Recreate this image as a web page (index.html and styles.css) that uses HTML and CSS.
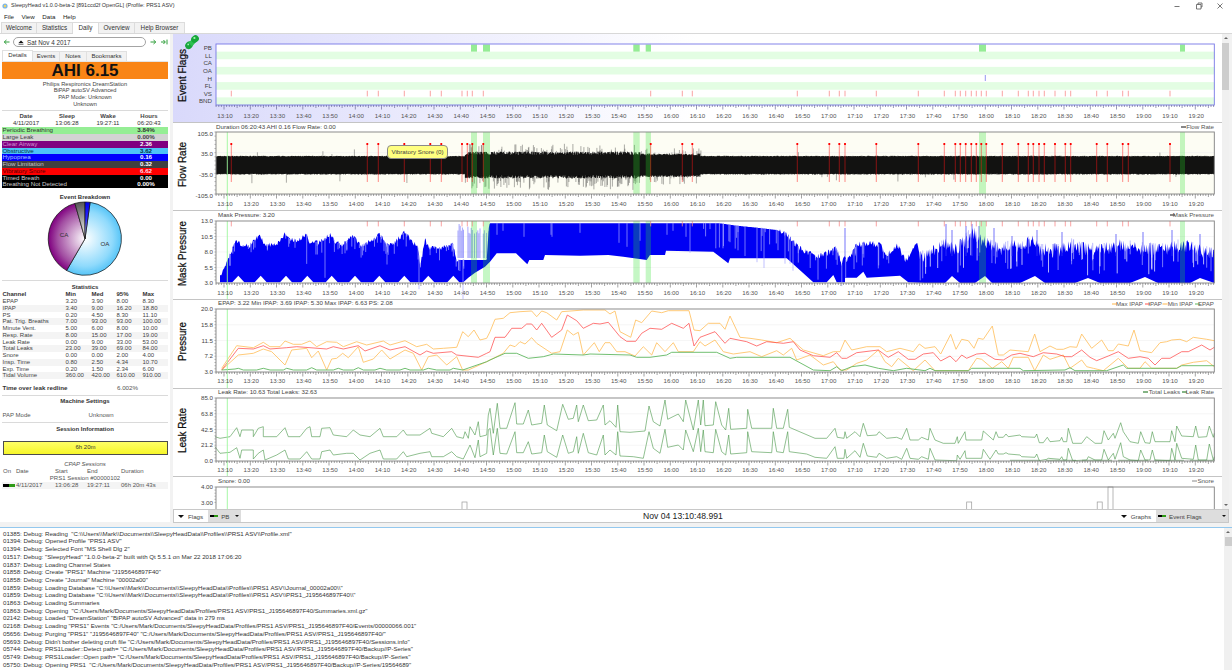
FILE: index.html
```html
<!DOCTYPE html>
<html lang="en">
<head>
<meta charset="utf-8">
<title>SleepyHead</title>
<link rel="stylesheet" href="styles.css">
</head>
<body>
<div class="app">
  <header class="titlebar">
    <svg class="app-icon" viewBox="0 0 6 6"><circle cx="3" cy="3" r="2.6" fill="#7fb6e6"/><circle cx="3" cy="3" r="1.2" fill="#f4d35e"/></svg>
    <span>SleepyHead v1.0.0-beta-2 [891ccd2f OpenGL] (Profile: PRS1 ASV)</span>
    <div class="winctl">
      <svg viewBox="0 0 8 8"><path d="M1.5 4.5h5" stroke="#777"/></svg>
      <svg viewBox="0 0 8 8"><path d="M1.5 2.5h4.5v4.5h-4.5zM3 2.5v-1.5h4v4h-1" fill="none" stroke="#555" stroke-width=".8"/></svg>
      <svg viewBox="0 0 8 8"><path d="M1.5 1.5l5 5M6.5 1.5l-5 5" stroke="#555" stroke-width=".8"/></svg>
    </div>
  </header>
  <nav class="menubar"><span>File</span><span>View</span><span>Data</span><span>Help</span></nav>
  <nav class="tabs">
    <span class="tab tab-welcome">Welcome</span>
    <span class="tab tab-stats">Statistics</span>
    <span class="tab tab-daily is-active">Daily</span>
    <span class="tab tab-over">Overview</span>
    <span class="tab tab-help">Help Browser</span>
  </nav>
  <main class="main">
    <aside class="side">
      <div class="datenav">
        <svg class="nav-arrow" viewBox="0 0 7 6"><path d="M6.5 3H1.5M3.5 1L1.2 3l2.3 2" fill="none" stroke="#2f9e3a" stroke-width="1"/></svg>
        <div class="datebox"><svg viewBox="0 0 6 5"><path d="M.5 3L3 .5 5.5 3z" fill="#111"/><path d="M.5 4.2h5" stroke="#111" stroke-width=".7"/></svg><span>Sat Nov 4 2017</span></div>
        <svg class="nav-arrow" viewBox="0 0 7 6"><path d="M.5 3h5M3.5 1l2.3 2-2.3 2" fill="none" stroke="#2f9e3a" stroke-width="1"/></svg>
        <svg class="nav-arrow" viewBox="0 0 7 6"><path d="M0 3h4M2.4 1l2 2-2 2M6 .6v4.8" fill="none" stroke="#2f9e3a" stroke-width="1"/></svg>
      </div>
      <div class="subtabs">
        <span class="subtab sub-details is-active">Details</span>
        <span class="subtab sub-events">Events</span>
        <span class="subtab sub-notes">Notes</span>
        <span class="subtab sub-books">Bookmarks</span>
      </div>
      <div class="ahi">AHI 6.15</div>
      <div class="machine">
        <div>Philips Respironics DreamStation</div>
        <div>BiPAP autoSV Advanced</div>
        <div>PAP Mode: Unknown</div>
        <div>Unknown</div>
      </div>
      <hr class="rule rule-machine">
      <div class="daytable">
        <b>Date</b><b>Sleep</b><b>Wake</b><b>Hours</b>
        <span>4/11/2017</span><span>13:06:28</span><span>19:27:11</span><span>06:20:43</span>
      </div>
      <div class="indices">
        <div class="idx idx-pb"><span>Periodic Breathing</span><b>3.84%</b></div>
        <div class="idx idx-ll"><span>Large Leak</span><b>0.00%</b></div>
        <div class="idx idx-ca"><span>Clear Airway</span><b>2.36</b></div>
        <div class="idx idx-oa"><span>Obstructive</span><b>3.62</b></div>
        <div class="idx idx-h"><span>Hypopnea</span><b>0.16</b></div>
        <div class="idx idx-fl"><span>Flow Limitation</span><b>0.32</b></div>
        <div class="idx idx-vs"><span>Vibratory Snore</span><b>6.62</b></div>
        <div class="idx idx-tb"><span>Timed Breath</span><b>0.00</b></div>
        <div class="idx idx-bnd"><span>Breathing Not Detected</span><b>0.00%</b></div>
      </div>
      <div class="section-title title-pie">Event Breakdown</div>
      <svg class="pie" viewBox="40 202 90 76" aria-label="Event breakdown pie chart">
        <defs>
          <radialGradient id="gOA" gradientUnits="userSpaceOnUse" cx="85" cy="239.7" r="36.7"><stop offset="0" stop-color="#fff"/><stop offset=".75" stop-color="#8fdafc"/><stop offset="1" stop-color="#55c4f7"/></radialGradient>
          <radialGradient id="gCA" gradientUnits="userSpaceOnUse" cx="85" cy="239.7" r="36.7"><stop offset="0" stop-color="#fff"/><stop offset=".75" stop-color="#a24ea2"/><stop offset="1" stop-color="#800080"/></radialGradient>
          <radialGradient id="gFL" gradientUnits="userSpaceOnUse" cx="85" cy="239.7" r="36.7"><stop offset="0" stop-color="#fff"/><stop offset="1" stop-color="#555"/></radialGradient>
          <radialGradient id="gH" gradientUnits="userSpaceOnUse" cx="85" cy="239.7" r="36.7"><stop offset="0" stop-color="#fff"/><stop offset=".5" stop-color="#3030ff"/><stop offset="1" stop-color="#0000f0"/></radialGradient>
        </defs>
        <g stroke="#111" stroke-width=".7">
          <path fill="url(#gOA)" d="M85 239.7L90.1 203.3A36.7 36.7 0 1 1 66.6 271.5Z"/>
          <path fill="url(#gCA)" d="M85 239.7L66.6 271.5A36.7 36.7 0 0 1 74.9 204.4Z"/>
          <path fill="url(#gFL)" d="M85 239.7L74.9 204.4A36.7 36.7 0 0 1 85 203Z"/>
          <path fill="url(#gH)" d="M85 239.7L85 203A36.7 36.7 0 0 1 90.1 203.3Z"/>
        </g>
        <text x="64" y="237.7" text-anchor="middle" class="pie-label">CA</text>
        <text x="105" y="247" text-anchor="middle" class="pie-label">OA</text>
      </svg>
      <hr class="rule rule-pie">
      <div class="section-title title-stats">Statistics</div>
      <div class="stats">
        <div class="st st-head"><span>Channel</span><span>Min</span><span>Med</span><span>95%</span><span>Max</span></div>
        <div class="st"><span>EPAP</span><span>3.20</span><span>3.90</span><span>8.00</span><span>8.30</span></div>
        <div class="st st-alt"><span>IPAP</span><span>3.40</span><span>9.00</span><span>16.20</span><span>18.80</span></div>
        <div class="st"><span>PS</span><span>0.20</span><span>4.50</span><span>8.30</span><span>11.10</span></div>
        <div class="st st-alt"><span>Pat. Trig. Breaths</span><span>7.00</span><span>93.00</span><span>93.00</span><span>100.00</span></div>
        <div class="st"><span>Minute Vent.</span><span>5.00</span><span>6.00</span><span>8.00</span><span>10.00</span></div>
        <div class="st st-alt"><span>Resp. Rate</span><span>8.00</span><span>15.00</span><span>17.00</span><span>19.00</span></div>
        <div class="st"><span>Leak Rate</span><span>0.00</span><span>9.00</span><span>33.00</span><span>53.00</span></div>
        <div class="st st-alt"><span>Total Leaks</span><span>23.00</span><span>39.00</span><span>69.00</span><span>84.00</span></div>
        <div class="st"><span>Snore</span><span>0.00</span><span>0.00</span><span>2.00</span><span>4.00</span></div>
        <div class="st st-alt"><span>Insp. Time</span><span>0.80</span><span>2.50</span><span>4.34</span><span>10.70</span></div>
        <div class="st"><span>Exp. Time</span><span>0.20</span><span>1.50</span><span>2.34</span><span>6.00</span></div>
        <div class="st st-alt"><span>Tidal Volume</span><span>360.00</span><span>420.00</span><span>610.00</span><span>910.00</span></div>
      </div>
      <div class="redline"><b>Time over leak redline</b><span>6.002%</span></div>
      <hr class="rule rule-redline">
      <div class="section-title title-machine">Machine Settings</div>
      <div class="papmode"><span>PAP Mode</span><span>Unknown</span></div>
      <hr class="rule rule-pap">
      <div class="section-title title-session">Session Information</div>
      <div class="sessionbar">6h 20m</div>
      <div class="cpap-title">CPAP Sessions</div>
      <div class="sess sess-head"><span>On</span><span>Date</span><span>Start</span><span>End</span><span>Duration</span></div>
      <div class="sess-name">PRS1 Session #00000102</div>
      <div class="sess sess-row"><span class="swatch"></span><span>4/11/2017</span><span>13:06:28</span><span>19:27:11</span><span>06h 20m 43s</span></div>
    </aside>
    <section class="graphcol">
      <div class="graphwrap">
        <div class="graphs" id="graphs"></div>
        <div class="vscroll"><span class="sc-up"></span><span class="sc-thumb"></span><span class="sc-down"></span></div>
        <svg class="pin" viewBox="0 0 14 15" aria-hidden="true">
          <path d="M.5 14.5L4 10" stroke="#8a8a8a" stroke-width=".8"/>
          <ellipse cx="4" cy="10.2" rx="3.6" ry="4" transform="rotate(40 4 10.2)" fill="#18a63c"/>
          <path d="M3.5 7.5L8.5 3 11.5 6.5 7 11.5z" fill="#2cc050"/>
          <ellipse cx="10" cy="4" rx="4" ry="3.5" transform="rotate(-35 10 4)" fill="#16a83a"/>
          <circle cx="9.4" cy="3" r="1.1" fill="#a8f4b8"/>
          <circle cx="3.2" cy="9.4" r=".9" fill="#a0f0b0"/>
        </svg>
        <div class="tooltip">Vibratory Snore (0)</div>
      </div>
      <div class="bottombar">
        <div class="bb-group">
          <span class="tri"></span><span class="bb-label">Flags</span>
          <div class="combo combo-flags"><i class="swatch"></i><span>PB</span><u class="tri tri-small"></u></div>
        </div>
        <div class="bb-time">Nov 04 13:10:48.991</div>
        <div class="bb-group">
          <span class="tri"></span><span class="bb-label">Graphs</span>
          <div class="combo combo-graphs"><i class="swatch"></i><span>Event Flags</span><u class="tri tri-small"></u></div>
        </div>
      </div>
    </section>
  </main>
  <section class="logpanel">
    <pre class="log">01385: Debug: Reading  "C:\\Users\\Mark\\Documents\\SleepyHeadData\\Profiles\\PRS1 ASV\\Profile.xml"
01394: Debug: Opened Profile "PRS1 ASV"
01394: Debug: Selected Font "MS Shell Dlg 2"
01517: Debug: "SleepyHead" "1.0.0-beta-2" built with Qt 5.5.1 on Mar 22 2018 17:06:20
01837: Debug: Loading Channel States
01858: Debug: Create "PRS1" Machine "J195646897F40"
01858: Debug: Create "Journal" Machine "00002a00"
01859: Debug: Loading Database "C:\\Users\\Mark\\Documents\\SleepyHeadData\\Profiles\\PRS1 ASV\\Journal_00002a00\\"
01859: Debug: Loading Database "C:\\Users\\Mark\\Documents\\SleepyHeadData\\Profiles\\PRS1 ASV\\PRS1_J195646897F40\\"
01863: Debug: Loading Summaries
01863: Debug: Opening  "C:/Users/Mark/Documents/SleepyHeadData/Profiles/PRS1 ASV/PRS1_J195646897F40/Summaries.xml.gz"
02142: Debug: Loaded "DreamStation" "BiPAP autoSV Advanced" data in 279 ms
02168: Debug: Loading "PRS1" Events "C:/Users/Mark/Documents/SleepyHeadData/Profiles/PRS1 ASV/PRS1_J195646897F40/Events/00000066.001"
05656: Debug: Purging "PRS1" "J195646897F40" "C:/Users/Mark/Documents/SleepyHeadData/Profiles/PRS1 ASV/PRS1_J195646897F40/"
05693: Debug: Didn't bother deleting cruft file "C:/Users/Mark/Documents/SleepyHeadData/Profiles/PRS1 ASV/PRS1_J195646897F40/Sessions.info"
05744: Debug: PRS1Loader::Detect path= "C:/Users/Mark/Documents/SleepyHeadData/Profiles/PRS1 ASV/PRS1_J195646897F40/Backup//P-Series"
05749: Debug: PRS1Loader::Open path= "C:/Users/Mark/Documents/SleepyHeadData/Profiles/PRS1 ASV/PRS1_J195646897F40/Backup//P-Series"
05750: Debug: Opening PRS1  "C:/Users/Mark/Documents/SleepyHeadData/Profiles/PRS1 ASV/PRS1_J195646897F40/Backup//P-Series/19564689"</pre>
    <div class="vscroll vscroll-log"><span class="sc-up"></span><span class="sc-thumb"></span></div>
  </section>
</div>
<script src="chart.js"></script>
</body>
</html>
```
FILE: styles.css
```css
* { box-sizing: border-box; }
html, body { margin: 0; height: 100%; }
body { font: 6px/7px "Liberation Sans", Arial, sans-serif; color: #222; background: #fff; overflow: hidden; }
.app { width: 1232px; height: 670px; display: flex; flex-direction: column; overflow: hidden; }

.titlebar { height: 11px; display: flex; align-items: center; font-size: 5.5px; padding-left: 2px; color: #333; }
.app-icon { width: 6px; height: 6px; margin-right: 3px; }
.winctl { margin-left: auto; display: flex; gap: 13.5px; padding-right: 8px; }
.winctl svg { width: 8px; height: 8px; }
.menubar { height: 11px; display: flex; gap: 7.5px; padding-left: 4px; align-items: center; font-size: 6.2px; }
.tabs { height: 12px; display: flex; align-items: flex-end; padding-left: 1px; border-bottom: 1px solid #d8d8d8; background: #fff; }
.tab { height: 11px; text-align: center; background: #f2f2f2; border: 1px solid #dcdcdc; border-bottom: 0; border-left: 0; line-height: 10px; font-size: 6.3px; color: #333; }
.tab-welcome { width: 36px; border-left: 1px solid #dcdcdc; }
.tab-stats { width: 36px; }
.tab-daily { width: 26px; }
.tab-over { width: 36px; }
.tab-help { width: 50px; }
.tab.is-active { background: #fff; height: 12px; position: relative; top: 1px; }

.main { height: 493px; display: flex; background: #f2f2f2; }
.side { width: 170px; background: #fff; padding: 1px 2px 0; height: 488px; flex: none; }
.datenav { height: 14px; display: flex; align-items: center; gap: 0; }
.nav-arrow { width: 7px; height: 6px; }
.nav-arrow:first-child { margin-left: 1px; margin-right: 3px; }
.datenav .nav-arrow:nth-child(3) { margin-left: 4px; }
.datenav .nav-arrow:nth-child(4) { margin-left: 4px; }
.datebox { width: 133px; height: 10px; border: 1px solid #a4a4a4; border-radius: 5px; display: flex; align-items: center; padding-left: 4px; gap: 3px; font-size: 6.3px; color: #333; background: #fff; }
.datebox svg { width: 6px; height: 5px; }
.subtabs { height: 11px; margin-top: 2px; display: flex; align-items: flex-end; border-bottom: 1px solid #e4e4e4; }
.subtab { height: 10px; text-align: center; line-height: 9px; background: #f2f2f2; border: 1px solid #e0e0e0; border-bottom: 0; border-left: 0; font-size: 6px; color: #333; }
.sub-details { width: 31px; border-left: 1px solid #e0e0e0; }
.sub-events { width: 27px; }
.sub-notes { width: 27px; }
.sub-books { width: 40px; }
.subtab.is-active { background: #fff; height: 11px; }
.ahi { height: 17px; background: #f98516; color: #111; font: bold 17px/17px "Liberation Sans", Arial, sans-serif; text-align: center; }
.machine { margin-top: 1.6px; line-height: 6.7px; font-size: 5.7px; text-align: center; color: #444; height: 26.8px; }
.rule { border: 0; border-top: 1px solid #dadada; margin: 0; height: 0; }
.rule-machine { margin-top: 2.5px; }
.daytable { display: grid; grid-template-columns: repeat(4, 41px); justify-content: start; text-align: center; line-height: 7px; padding: 2.6px 0 0 3.5px; color: #333; }
.daytable b { color: #444; }
.indices { height: 60.7px; font-size: 6.2px; }
.idx { height: 6.74px; line-height: 6.74px; display: flex; padding-left: .5px; }
.idx b { margin-left: auto; width: 40px; text-align: center; padding-right: 4px; }
.idx-pb { background: #95ee95; color: #333; }
.idx-ll { background: #d3d3d3; color: #444; }
.idx-ca { background: #800080; color: #d090d0; }
.idx-ca b, .idx-h b, .idx-fl b, .idx-tb b, .idx-bnd b { color: #fff; }
.idx-oa { background: #4dc3f8; color: #034; }
.idx-h { background: #0000ff; color: #a8c8ff; }
.idx-fl { background: #404040; color: #c4c4c4; }
.idx-vs { background: #ff0000; color: #500; }
.idx-vs b { color: #fde; }
.idx-tb, .idx-bnd { background: #000; color: #ccc; }
.section-title { font-weight: bold; text-align: center; color: #333; line-height: 7px; }
.title-pie { margin-top: 6px; }
.pie { display: block; width: 90px; height: 76px; margin: 0 0 0 38px; }
.pie-label { font-size: 6.2px; fill: #333; }
.rule-pie { margin-top: 2.5px; }
.title-stats { margin-top: 3.8px; }
.st { display: grid; grid-template-columns: 63px 26px 25px 26px 26px; height: 6.76px; line-height: 6.76px; color: #444; padding-left: .5px; }
.st-alt { background: #f4f4f4; }
.st-head { font-weight: bold; height: 6.6px; color: #333; }
.redline { display: grid; grid-template-columns: 114.5px 1fr; margin-top: 5px; line-height: 7px; padding-left: .5px; font-size: 6.2px; }
.redline b { color: #333; }
.redline span { color: #555; }
.rule-redline { margin-top: 3.5px; }
.title-machine { margin-top: 2.5px; }
.papmode { display: grid; grid-template-columns: 86px 1fr; margin-top: 7px; padding-left: .5px; color: #555; }
.rule-pap { margin-top: 2.5px; }
.title-session { margin-top: 3.5px; }
.sessionbar { height: 14px; margin: 8px 0 0 1px; width: 165px; background: linear-gradient(#ffff66, #f6f62a); border: 1.5px solid #4c4c4c; text-align: center; line-height: 11px; color: #333; }
.cpap-title { margin-top: 5.5px; font-style: italic; text-align: center; color: #555; }
.sess { display: grid; grid-template-columns: 13px 39px 32px 34px 1fr; padding-left: 1px; color: #555; }
.sess-name { text-align: center; color: #555; }
.sess-row { background: #f4f4f4; align-items: center; }
.swatch { display: block; width: 12px; height: 3px; background: linear-gradient(90deg, #000 50%, #2e9a16 50%); }

.graphcol { width: 1056px; margin-left: 3px; flex: none; display: flex; flex-direction: column; }
.graphwrap { height: 475px; display: flex; position: relative; }
.graphs { width: 1049px; height: 475px; overflow: hidden; background: #fff; }
.graph { border-bottom: 1px solid #c4c4c4; background: #fff; }
.graph svg { display: block; }
.graph-flags { background: linear-gradient(90deg, #d9d9fb, #fff 50%); }
.chart-title { font: 10.3px "Liberation Sans", Arial, sans-serif; fill: #111; stroke: #111; stroke-width: .25px; text-anchor: middle; }
.chart-axis { font: 6.2px "Liberation Sans", Arial, sans-serif; fill: #444; }
.chart-time { font: 6.2px "Liberation Sans", Arial, sans-serif; fill: #555; text-anchor: middle; }
.chart-info { font: 6.2px "Liberation Sans", Arial, sans-serif; fill: #444; }
.chart-legend { font: 6.2px "Liberation Sans", Arial, sans-serif; fill: #555; text-anchor: end; }
.vscroll { width: 7px; background: #f0f0f0; display: flex; flex-direction: column; align-items: center; }
.sc-up { width: 0; height: 0; border: 2px solid transparent; border-bottom: 2.5px solid #666; border-top: 0; margin-top: 3px; }
.sc-thumb { width: 7px; height: 47px; margin-top: 4px; background: #cdcdcd; }
.sc-down { width: 0; height: 0; border: 2px solid transparent; border-top: 2.5px solid #666; border-bottom: 0; margin-top: auto; margin-bottom: 3px; }
.pin { position: absolute; left: 12px; top: 1px; width: 14px; height: 15px; }
.tooltip { position: absolute; left: 214px; top: 111px; width: 61px; height: 14px; background: #ffff80; border: 1px solid #8a8a8a; border-radius: 4px; text-align: center; line-height: 12px; color: #444; font-size: 6.2px; }

.bottombar { height: 14px; background: #fff; border: 1px solid #c8c8c8; display: flex; align-items: stretch; justify-content: space-between; padding-left: 4px; position: relative; font-size: 6.2px; }
.bb-group { display: flex; align-items: center; }
.bb-label { margin-left: 4px; color: #444; }
.tri { width: 0; height: 0; border: 3px solid transparent; border-top: 3.4px solid #111; border-bottom: 0; }
.combo { display: flex; align-items: center; height: 12px; background: #dddddd; padding-left: 2px; gap: 3px; color: #444; }
.combo .swatch { width: 8px; height: 2.5px; flex: none; }
.combo .tri-small { margin-left: auto; margin-right: 2px; border-width: 2px; border-top-width: 2.4px; border-bottom: 0; }
.combo-flags { width: 33px; margin-left: 5px; }
.combo-graphs { width: 72px; margin-left: 5px; }
.bb-time { font-size: 8.6px; line-height: 12px; color: #222; position: absolute; left: 469px; top: 0; }

.logpanel { height: 143px; border-top: 1px solid #93c8ee; display: flex; background: #fff; }
.log { margin: 0; flex: 1; padding: 1.7px 0 0 3px; font: 6.15px/7.7px "Liberation Sans", Arial, sans-serif; color: #333; overflow: hidden; }
.vscroll-log { width: 8px; flex: none; }
.vscroll-log .sc-thumb { height: 9px; }
```
FILE: chart.js
```js
// Draws the six SleepyHead graphs as SVG. Coordinates are page pixels, so each
// svg's viewBox is simply the slice of the page that its row occupies.
const NS = 'http://www.w3.org/2000/svg';
const L = 216, R = 1214.3;
const xOf = min => 224 + 2.625 * min;
const VS = [231.3,367.3,378.3,404.3,430.3,441.3,462,467.3,472.3,483.3,650.7,682.3,692.3,797.3,829.3,839.3,845,876.3,918.3,944.3,955.3,960.3,965.7,971.3,976.3,981.3,986.3,1002.3,1018.3,1028.3,1033.3,1039,1044.3,1055,1065.3,1070.7,1096.7,1107.3,1122.7,1128.3,1170];
const PB = [[471,477],[483,490],[633.3,639.7],[645.7,651],[979,986],[1180,1185]];

let seed = 7;
const rnd = () => (seed = (seed * 16807) % 2147483647) / 2147483647;

function el(parent, name, attrs, text) {
  const e = document.createElementNS(NS, name);
  for (const k in attrs) e.setAttribute(k, attrs[k]);
  if (text !== undefined) e.textContent = text;
  parent.appendChild(e);
  return e;
}
const parse = (ox, oy, s) => s.trim().split(/\s+/).map(p => { const [a, b] = p.split(',').map(Number); return [ox + a / 3, oy + b / 3]; });
const cut = (pts, a, b) => pts.filter(p => p[0] >= a && p[0] < b);
const toD = pts => 'M' + pts.map(p => p[0].toFixed(1) + ' ' + p[1].toFixed(1)).join('L');
function valueAt(pts, x) {
  for (let i = 0; i < pts.length - 1; i++) {
    const [x0, y0] = pts[i], [x1, y1] = pts[i + 1];
    if (x0 <= x && x1 > x) return y0 + (y1 - y0) * (x - x0) / (x1 - x0);
  }
  return pts[pts.length - 1][1];
}

function makeGraph(top, height, cls) {
  const wrap = document.createElement('div');
  wrap.className = 'graph' + (cls ? ' ' + cls : '');
  document.getElementById('graphs').appendChild(wrap);
  return el(wrap, 'svg', { width: 1049, height, viewBox: `173 ${top} 1049 ${height}` });
}
function timeAxis(svg, y0, labelY, color) {
  let d = '';
  for (let m = -3; xOf(m) < R; m++) {
    const x = xOf(m).toFixed(1);
    d += `M${x} ${y0}v${m % 10 === 0 ? 4.5 : m % 5 === 0 ? 3 : 2}`;
  }
  el(svg, 'path', { d, stroke: color, 'stroke-width': .6, fill: 'none' });
  for (let m = 0; m <= 370; m += 10) {
    const h = 13 + Math.floor((10 + m) / 60), mm = (10 + m) % 60;
    el(svg, 'text', { x: xOf(m) + 1, y: labelY, class: 'chart-time' }, `${h}:${String(mm).padStart(2, '0')}`);
  }
}
function chartTitle(svg, title, y, length) {
  el(svg, 'text', { x: 186, y, class: 'chart-title', transform: `rotate(-90 186 ${y})`, textLength: length, lengthAdjust: 'spacingAndGlyphs' }, title);
}
function yAxis(svg, top, bottom, labels, labelShift) {
  const n = labels.length - 1;
  labels.forEach((t, i) => {
    const y = top + (bottom - top) * i / n;
    el(svg, 'text', { x: 213, y: y + labelShift, class: 'chart-axis', 'text-anchor': 'end' }, t);
    if (i > 0 && i < n) el(svg, 'path', { d: `M${L} ${y}H${R}`, stroke: '#f2f2f2', 'stroke-width': .7 });
  });
  let d = '';
  for (let y = top; y <= bottom; y += (bottom - top) / (n * 5)) d += `M214.4 ${y.toFixed(1)}h1.6`;
  el(svg, 'path', { d, stroke: '#777', 'stroke-width': .5 });
}
const frame = (svg, top, bottom, color) => el(svg, 'rect', { x: L, y: top, width: R - L, height: bottom - top, fill: 'none', stroke: color, 'stroke-width': .9 });
function pbBands(svg, top, bottom) {
  PB.forEach(([a, b]) => el(svg, 'rect', { x: a, y: top, width: b - a, height: bottom - top, fill: 'rgba(40,225,40,.27)' }));
}
const cursor = (svg, top, bottom) => el(svg, 'path', { d: `M227.3 ${top}V${bottom}`, stroke: '#9cf79c', 'stroke-width': .9 });
function info(svg, y, text, x) { el(svg, 'text', { x: x || 218, y, class: 'chart-info' }, text); }
function legend(svg, y, items) {
  items.forEach(([label, color, lineX, endX]) => {
    el(svg, 'path', { d: `M${lineX} ${y - 2}h5`, stroke: color, 'stroke-width': 1 });
    el(svg, 'text', { x: endX, y, class: 'chart-legend' }, label);
  });
}
function line(svg, pts, color, width, op) {
  el(svg, 'path', { d: toD(pts), fill: 'none', stroke: color, 'stroke-width': width || .9, 'stroke-opacity': op || 1, 'stroke-linejoin': 'round' });
}

/* ---------- Event Flags ---------- */
(function () {
  const top = 44, bottom = 105, rowH = (bottom - top) / 8;
  const svg = makeGraph(34, 88, 'graph-flags');
  el(svg, 'rect', { x: L, y: top, width: R - L, height: bottom - top, fill: '#fff' });
  ['PB', 'LL', 'CA', 'OA', 'H', 'FL', 'VS', 'BND'].forEach((t, i) => {
    if (i % 2) el(svg, 'rect', { x: L, y: top + i * rowH, width: R - L, height: rowH, fill: '#e3fde3' });
    el(svg, 'text', { x: 212, y: top + (i + .5) * rowH + 2.2, class: 'chart-axis', 'text-anchor': 'end' }, t);
  });
  PB.forEach(([a, b]) => el(svg, 'rect', { x: a, y: top + .5, width: b - a, height: rowH - .5, fill: '#95ec95' }));
  let d = '';
  VS.forEach(x => { d += `M${x} ${top + 6 * rowH + 1}v5.6`; });
  el(svg, 'path', { d, stroke: '#f98a8a', 'stroke-width': .8 });
  el(svg, 'path', { d: `M985.3 ${top + 4 * rowH + .5}v6`, stroke: '#7a7aee', 'stroke-width': .8 });
  frame(svg, top, bottom, '#7777e6');
  timeAxis(svg, bottom, 118, '#55558a');
  chartTitle(svg, 'Event Flags', 75.5, 53);
})();

/* ---------- Flow Rate ---------- */
(function () {
  const top = 132, bottom = 194;
  const svg = makeGraph(123, 87);
  el(svg, 'rect', { x: L, y: top, width: R - L, height: bottom - top, fill: '#fdfdf4' });
  yAxis(svg, top, bottom, ['105.0', '35.0', '-35.0', '-105.0'], 3.8);
  chartTitle(svg, 'Flow Rate', 164.5, 45);
  info(svg, 129, 'Duration 06:20:43 AHI 0.16 Flow Rate: 0.00', 216);
  legend(svg, 129, [['Flow Rate', '#111', 1181, 1214]]);
  let core = '', faint = '';
  for (let x = L + .4; x < R; x += .5) {
    const wide = x > 465 && x < 640, mid = x > 465 && x < 700;
    const up = wide ? 155 : mid ? 155.5 : 156.7, low = wide ? 175 : mid ? 175 : 173.6;
    const j = wide ? 3.5 : mid ? 2 : .9;
    core += `M${x.toFixed(1)} ${(up - rnd() * j).toFixed(1)}V${(low + rnd() * j).toFixed(1)}`;
    const p = wide ? .42 : mid ? .2 : .014;
    if (rnd() < p) {
      const hi = rnd() < .4;
      const len = (wide ? 5 : 3) + rnd() * (wide ? 10 : 7);
      faint += hi ? `M${x.toFixed(1)} ${up}v${(-len * .75).toFixed(1)}` : `M${x.toFixed(1)} ${low}v${len.toFixed(1)}`;
    }
  }
  el(svg, 'path', { d: faint, stroke: '#222', 'stroke-width': .6, 'stroke-opacity': .62 });
  el(svg, 'path', { d: core, stroke: '#000', 'stroke-width': .85 });
  pbBands(svg, top, bottom);
  let d = '', dots = '';
  VS.forEach(x => { d += `M${x} 144V182`; dots += `M${x - .9} 144h1.8`; });
  el(svg, 'path', { d, stroke: 'rgba(255,20,20,.62)', 'stroke-width': .8 });
  el(svg, 'path', { d: dots, stroke: '#f00', 'stroke-width': 1.8 });
  cursor(svg, top, 211);
  frame(svg, top, bottom, '#808080');
  timeAxis(svg, bottom, 206, '#666');
})();

/* ---------- Mask Pressure ---------- */
(function () {
  const top = 221, bottom = 283;
  const svg = makeGraph(211, 88);
  yAxis(svg, top, bottom, ['13.0', '10.5', '8.0', '5.5', '3.0'], 2.2);
  chartTitle(svg, 'Mask Pressure', 253.5, 65);
  info(svg, 217, 'Mask Pressure: 3.20');
  legend(svg, 217, [['Mask Pressure', '#111', 1170, 1214]]);
  const upper = [].concat(
    parse(170, 205, '150,232 150,218 160,200 170,170 185,140 198,103 210,118 240,122 268,90 285,120 320,118 345,85 360,105 380,108 410,88 420,112 450,112 480,88 500,115 520,118 550,92 570,122 600,110 630,88 650,120 670,118 703,82 730,112 745,130 750,185 765,105 780,130 820,128 850,118 858,165 950,165 957,60 960,55'),
    cut(parse(490, 35, '0,565 690,565 740,572 800,578 860,585 890,600 930,640 980,665 1020,650 1040,640 1055,690 1062,660 1070,680 1100,630 1140,625 1170,630 1190,660 1220,630 1250,680 1280,620 1290,680'), 490, 918),
    [[920,258],[930,252],[945,245],[955,250],[963,243],[972,232],[985,243],[1000,250],[1010,246],[1020,248],[1032,240],[1040,250],[1060,250],[1070,244],[1080,248],[1100,250],[1120,245],[1140,248],[1160,250],[1180,245],[1200,250],[R,255]]
  );
  const lower = [].concat(
    cut(parse(170, 205, '150,232 187,232 205,212 223,232 254,232 272,212 290,232 330,232 348,212 366,232 394,232 412,212 430,232 467,232 485,212 503,232 537,232 555,212 573,232 610,232 628,212 646,232 685,232 703,212 721,232 757,232 775,212 793,232 832,232 850,212 868,232 880,232 895,218 915,203 945,185 960,170'), 0, 490),
    cut(parse(490, 35, '0,680 20,655 78,655 112,688 118,675 160,675 165,660 270,662 355,660 400,665 470,675 480,660 525,660 528,647 670,650 715,685 720,670 890,670 970,742 1010,742 1030,720 1040,742 1065,742 1065,728 1100,728 1120,710 1130,728 1230,722 1255,742 1290,742'), 490, 918),
    [[925,283],[945,283],[952,276],[960,283],[975,283],[985,276],[992,283],[1020,283],[1035,276],[1045,283],[1075,283],[1088,278],[1100,283],[1130,283],[1145,277],[1158,283],[1190,283],[1200,278],[R,283]]
  );
  // pale strands where the pressure swings quickly around 14:42–14:50
  let strands = '';
  for (let x = 458; x < 490; x += 1.1) if (rnd() < .6) strands += `M${x.toFixed(1)} ${(224 + rnd() * 10).toFixed(1)}V258`;
  el(svg, 'path', { d: strands, stroke: '#6c6cfa', 'stroke-width': .6 });
  // a jagged top edge: the therapy pressure is noisy except where it sits at the ceiling
  const jag = [];
  for (let x = upper[0][0]; x < R; x += .7) {
    let y = valueAt(upper, x);
    const amp = x < 458 ? 2.5 : x < 490 ? 0 : x < 780 ? 0 : x < 920 ? 3 : 7;
    if (amp) y += (rnd() - .5) * amp * 2;
    jag.push([x, Math.max(223, y)]);
  }
  jag.push([R, 283]);
  el(svg, 'path', { d: toD(jag.concat(lower.slice().reverse())) + 'Z', fill: '#0000f4' });
  let cuts = '', blips = '', gaps = '';
  const spikes = [[306.7,30],[325,40],[387,20],[419,34],[463,50],[497,12],[503,8],[524,14],[551,12],[552,14],[580,10],[619,20],[627,24],[640,18],[667,12],[673,8],[686,14],[690,30],[723,25],[730,18],[738,25],[745,30],[757,35],[764,40],[778,20],[785,30],[793,30]];
  spikes.forEach(([x, len]) => { cuts += `M${x} ${(valueAt(upper, x) - .5).toFixed(1)}v${len}`; });
  for (let i = 0; i < 60; i++) {
    const x = 230 + rnd() * 235;
    cuts += `M${x.toFixed(1)} ${(valueAt(upper, x) - .5).toFixed(1)}v${(3 + rnd() * 10).toFixed(1)}`;
  }
  for (let i = 0; i < 40; i++) {
    const x = 690 + rnd() * 200;
    cuts += `M${x.toFixed(1)} ${(valueAt(upper, x) - .5).toFixed(1)}v${(4 + rnd() * 22).toFixed(1)}`;
  }
  for (let i = 0; i < 70; i++) {
    const x = 920 + rnd() * 294;
    const y = valueAt(upper, x) - 6;
    if (rnd() < .5) gaps += `M${x.toFixed(1)} ${y.toFixed(1)}V${(y + 14 + rnd() * 20).toFixed(1)}`;
    else cuts += `M${x.toFixed(1)} ${y.toFixed(1)}V${(y + 12 + rnd() * 18).toFixed(1)}`;
  }
  el(svg, 'path', { d: cuts, stroke: '#a8a8ff', 'stroke-width': .7 });
  el(svg, 'path', { d: gaps, stroke: '#fff', 'stroke-width': .7 });
  [[845,228],[946,224],[952,230],[966,226],[972,224],[979,226],[994,228],[1012,236],[1037,230],[1062,232],[1116,234],[1143,232],[1172,230],[1200,234]].forEach(([x, y]) => { blips += `M${x} ${y}V256`; });
  el(svg, 'path', { d: blips, stroke: '#3a3af8', 'stroke-width': .7 });
  pbBands(svg, top, bottom);
  let ticks = '';
  VS.forEach(x => { ticks += `M${x} ${top}v5.4`; });
  el(svg, 'path', { d: ticks, stroke: '#f98a8a', 'stroke-width': .8 });
  cursor(svg, top, 300);
  frame(svg, top, bottom, '#808080');
  timeAxis(svg, bottom, 295, '#666');
})();

/* ---------- Pressure ---------- */
(function () {
  const top = 309, bottom = 372;
  const svg = makeGraph(300, 88);
  yAxis(svg, top, bottom, ['20.0', '15.8', '11.5', '7.2', '3.0'], 2.2);
  chartTitle(svg, 'Pressure', 341.5, 39);
  info(svg, 305, 'EPAP: 3.22 Min IPAP: 3.69 IPAP: 5.30 Max IPAP: 6.63 PS: 2.08');
  legend(svg, 306, [['Max IPAP', '#ffb84d', 1112, 1143], ['IPAP', '#f55', 1145, 1162], ['Min IPAP', '#ffb84d', 1162.5, 1193], ['EPAP', '#5cb85c', 1195, 1214]]);
  const join = (a, b, c) => [].concat(cut(parse(170, 205, a), 0, 490), cut(parse(490, 300, b), 490, 905), cut(parse(900, 300, c), 905, 1215));
  const epap = join(
    '155,495 195,492 205,490 220,495 260,495 280,490 300,495 340,495 350,490 370,495 410,495 425,488 440,495 490,495 505,490 520,495 550,495 565,488 580,495 615,495 630,490 650,495 690,495 705,490 720,495 760,495 775,490 800,495 840,495 850,490 878,495 950,470 1000,445',
    '0,180 45,160 80,160 115,175 160,170 190,162 280,165 300,162 420,165 440,172 480,172 530,165 545,157 680,157 720,175 740,172 900,172 970,210 1020,212 1040,200 1055,212 1085,200 1125,195 1165,205 1210,212 1250,208 1290,212',
    '0,212 20,205 75,212 90,205 105,212 205,212 215,205 360,205 370,212 495,210 510,203 525,212 620,212 670,195 680,205 830,205 845,197 943,197');
  const maxI = join(
    '155,490 200,422 250,428 280,412 300,425 330,425 345,408 370,418 395,418 420,408 440,425 470,410 500,412 520,425 560,410 590,420 640,408 660,420 705,407 740,425 770,418 790,432 820,430 860,427 878,380 895,395 912,375 930,405 950,400 975,342',
    '0,95 15,58 40,55 60,38 90,35 125,33 140,50 155,33 170,38 200,60 215,35 280,30 345,30 360,42 375,33 390,95 422,112 437,60 455,68 485,33 515,38 535,32 597,32 612,90 630,92 655,70 690,70 705,88 720,48 750,112 780,115 815,120 860,128 900,115 940,150 1000,167 1030,155 1050,155 1065,120 1085,150 1130,140 1170,140 1190,155 1230,145 1270,155 1290,130',
    '0,145 40,155 58,132 75,145 105,140 122,162 152,103 168,148 185,118 205,122 222,145 235,115 250,118 277,78 295,165 310,165 330,150 385,155 404,102 420,155 450,138 470,148 490,148 510,140 530,142 545,102 575,145 605,120 625,152 640,152 655,132 685,138 702,90 720,152 755,158 780,128 800,125 815,120 840,118 860,125 880,112 920,118 943,122');
  const minI = join(
    '155,495 205,450 250,445 280,432 305,440 345,480 365,435 410,430 425,458 445,438 470,495 485,462 500,460 518,445 535,458 565,425 580,472 610,462 635,435 660,462 705,435 730,445 755,495 775,455 800,450 830,480 860,455 878,495 895,495 950,470 1000,445',
    '0,180 40,160 60,135 75,140 90,125 105,132 125,113 140,130 185,160 210,155 232,90 250,105 265,97 280,165 313,128 328,155 345,128 360,128 380,155 405,155 435,168 460,140 485,165 500,128 525,155 550,128 565,155 610,155 630,125 645,138 675,120 700,155 730,162 780,155 815,170 860,152 880,165 905,145 920,180 960,165 1000,195 1030,185 1050,210 1070,210 1100,190 1130,180 1165,150 1185,185 1205,200 1225,175 1255,205 1290,195',
    '0,175 40,212 75,180 105,212 205,212 230,175 245,178 277,205 305,185 325,205 340,172 385,172 404,212 430,165 450,178 490,165 510,205 545,180 560,200 580,205 610,212 655,175 685,205 720,205 735,185 755,205 830,205 845,195 880,187 920,182 943,200');
  const ipap = join(
    '155,495 205,430 250,432 280,422 300,432 350,428 380,425 420,428 470,432 490,425 520,432 565,422 585,438 630,422 660,435 705,425 750,450 770,438 790,445 845,440 860,450 925,457 950,445 970,400',
    '0,155 15,112 45,112 65,85 95,85 110,72 125,72 140,90 155,70 185,112 215,90 232,45 260,62 280,85 310,70 330,72 355,67 390,110 410,124 437,124 455,100 480,85 515,88 545,70 580,85 597,70 612,138 630,112 675,95 705,130 720,115 770,125 800,138 830,125 880,130 910,125 930,150 970,167 1020,172 1040,158 1055,175 1070,175 1100,158 1165,150 1195,172 1225,155 1255,178 1270,178 1290,165',
    '0,165 25,178 45,178 70,162 100,158 122,183 150,168 168,185 185,165 200,175 230,162 255,160 285,178 310,180 335,165 360,160 400,170 430,158 470,162 495,170 515,170 545,150 570,172 590,182 625,168 655,155 685,175 720,170 745,175 765,195 785,175 810,175 845,155 865,155 905,135 930,150 943,142');
  line(svg, maxI, '#ffc46a', .9);
  line(svg, minI, '#ffc46a', .9);
  line(svg, ipap, '#f44', .9, .8);
  line(svg, epap, '#62b862', .9);
  cursor(svg, top, 389);
  frame(svg, top, bottom, '#808080');
  timeAxis(svg, bottom, 383, '#666');
})();

/* ---------- Leak Rate ---------- */
(function () {
  const top = 398, bottom = 461;
  const svg = makeGraph(389, 87);
  yAxis(svg, top, bottom, ['85.0', '63.8', '42.5', '21.2', '0.0'], 2.2);
  chartTitle(svg, 'Leak Rate', 430.5, 45);
  info(svg, 394, 'Leak Rate: 10.63 Total Leaks: 32.63');
  legend(svg, 394, [['Total Leaks', '#0b6b0b', 1143, 1180], ['Leak Rate', '#0b6b0b', 1182, 1214]]);
  const join = (a, b, c) => [].concat(cut(parse(170, 385, a), 0, 490), cut(parse(490, 300, b), 490, 905), cut(parse(900, 300, c), 905, 1215));
  const total = join(
    '135,155 150,160 180,155 200,128 210,155 215,135 250,135 250,155 265,130 280,125 280,155 320,155 345,128 355,155 390,155 410,130 420,125 425,155 450,155 455,130 480,128 490,150 530,155 550,135 570,150 600,155 630,130 640,155 680,155 700,135 710,150 750,150 780,130 785,145 820,155 845,130 860,155 880,160 885,140 895,160 900,125 915,150 925,110 930,155 950,150 955,90 965,160 965,70 980,130 982,55',
    '0,325 10,400 22,310 30,385 50,385 75,308 80,372 100,372 115,330 125,375 155,370 163,315 172,375 200,392 218,313 235,358 250,355 260,315 265,365 280,315 295,362 320,360 340,315 345,375 360,362 378,382 383,315 390,395 420,397 465,393 477,318 490,365 510,378 525,300 533,358 565,342 580,365 587,300 610,390 625,300 632,375 640,300 645,377 670,375 677,305 695,375 707,390 716,325 722,388 770,385 773,328 785,385 845,385 850,325 860,385 880,385 893,328 898,382 975,415 1010,415 1035,385 1042,412 1062,415 1065,395 1070,415 1095,395 1110,410 1120,370 1132,407 1160,405 1167,395 1190,415 1220,412 1235,418 1247,385 1260,418 1290,422',
    '0,415 12,410 20,385 30,420 55,420 65,412 85,420 90,385 105,420 130,430 165,430 172,410 175,430 195,395 198,420 245,420 250,393 280,420 288,395 295,412 310,412 318,402 325,410 360,405 365,410 405,412 410,402 418,428 430,428 442,412 450,425 480,422 485,412 490,425 500,425 505,385 518,430 545,430 560,410 585,430 605,430 612,392 625,420 640,400 645,415 662,368 670,395 690,425 715,430 722,395 735,428 750,430 757,395 765,425 810,425 815,392 825,425 830,378 845,408 880,410 887,378 895,412 920,410 928,378 940,412 943,400');
  const leak = join(
    '135,185 150,205 180,202 200,188 210,220 215,195 250,195 250,222 265,205 280,195 285,225 320,210 345,195 355,222 390,222 410,200 425,222 450,222 455,200 480,195 490,210 530,205 550,205 570,225 600,205 630,195 640,222 680,222 700,200 710,215 750,205 780,200 785,215 820,215 845,200 860,215 880,222 900,180 915,218 925,165 930,215 950,205 955,135 965,215 965,130',
    '0,385 10,465 22,385 30,460 50,462 75,395 80,458 100,458 115,425 125,462 155,458 163,405 172,455 200,472 218,405 235,460 250,455 260,410 265,460 280,400 295,458 320,465 340,405 345,465 360,450 378,465 383,395 390,468 430,470 460,475 477,395 490,445 510,460 525,388 533,442 565,435 580,450 587,390 610,455 625,385 632,455 640,390 645,455 670,458 677,388 695,455 707,465 716,405 722,462 770,458 773,395 785,455 845,458 850,395 860,455 880,458 893,395 898,455 950,462 975,472 1010,475 1035,440 1042,475 1062,475 1065,448 1070,475 1095,452 1110,472 1120,430 1132,468 1160,472 1167,460 1190,475 1220,470 1235,478 1247,445 1260,472 1290,475',
    '0,480 12,470 20,445 30,475 55,478 65,470 85,478 90,445 105,480 170,482 172,465 180,478 195,452 198,475 245,475 250,448 270,478 288,450 295,462 310,462 318,458 325,462 360,465 365,470 405,472 410,462 418,482 440,478 445,475 480,478 485,470 490,480 500,480 505,445 518,482 560,480 565,470 585,480 605,480 612,448 625,480 640,460 645,478 662,428 670,470 690,480 715,482 722,450 735,480 750,480 757,450 765,480 810,482 815,445 825,480 830,430 845,475 880,478 887,435 895,480 920,480 928,432 940,480 943,470');
  line(svg, total, '#4f9a4f', .7, .9);
  line(svg, leak, '#4f9a4f', .7, .9);
  el(svg, 'path', { d: 'M1010 460.3H1214', stroke: '#1d6b1d', 'stroke-width': .5, 'stroke-dasharray': '30 6' });
  cursor(svg, top, 477);
  frame(svg, top, bottom, '#808080');
  timeAxis(svg, bottom, 472, '#666');
})();

/* ---------- Snore: only its top shows above the scroll area's edge ---------- */
(function () {
  const top = 487;
  const svg = makeGraph(477, 32);
  yAxis(svg, top, 502.4, ['4.00', '3.00'], 2.2);
  chartTitle(svg, 'Snore', 522, 24);
  info(svg, 483, 'Snore: 0.00');
  legend(svg, 483, [['Snore', '#888', 1192, 1214]]);
  [[462, 502], [966.7, 502], [1097.2, 502], [1108, 487]].forEach(([x, y]) => el(svg, 'rect', { x, y, width: 5, height: 50, fill: '#fff', stroke: '#999', 'stroke-width': .7 }));
  cursor(svg, top, 510);
  frame(svg, top, 548, '#808080');
})();
```
